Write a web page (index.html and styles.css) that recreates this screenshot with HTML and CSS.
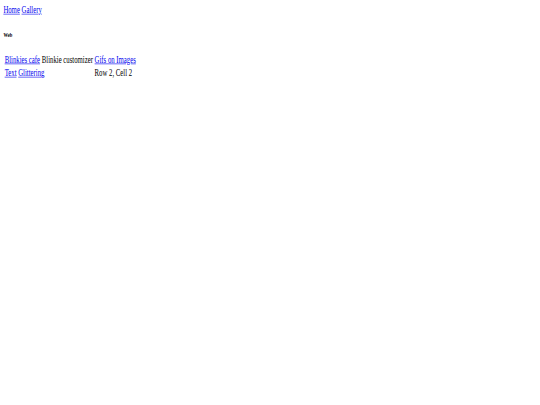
FILE: index.html
```html
<!DOCTYPE html>
<html>
<head>
<meta charset="utf-8">
<title>Web</title>
<link rel="stylesheet" href="styles.css">
</head>
<body>
<div class="frame">
  <div class="page">
    <a href="#">Home</a> <a href="#">Gallery</a>
    <h6 class="section">Web</h6>
    <table class="links">
      <tr>
        <td><a href="#">Blinkies cafe</a></td>
        <td>Blinkie customizer</td>
        <td><a href="#">Gifs on Images</a></td>
      </tr>
      <tr>
        <td colspan="2"><a href="#">Text</a> <a href="#">Glittering</a></td>
        <td>Row 2, Cell 2</td>
      </tr>
    </table>
  </div>
</div>
</body>
</html>
```

FILE: styles.css
```css
html, body {
  margin: 0;
  padding: 0;
  background: #ffffff;
  overflow: hidden;
}
.frame {
  width: 540px;
  height: 405px;
  overflow: hidden;
}
.page {
  box-sizing: border-box;
  width: 1280px;
  height: 675px;
  padding: 8px;
  font-family: "Liberation Serif", "Times New Roman", serif;
  font-size: 16px;
  color: #000;
  transform: scale(0.421875, 0.6);
  transform-origin: 0 0;
}
.page a {
  color: #0000ee;
}
.section {
  font-size: 10.72px;
  margin: 25px 0;
}
.links {
  border-spacing: 2px;
}
.links td {
  padding: 1px;
}
```
